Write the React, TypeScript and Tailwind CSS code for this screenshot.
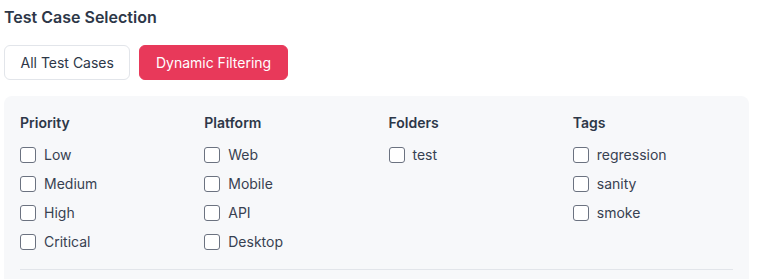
import { useState } from 'react'

const groups = [
  { title: 'Priority', items: ['Low', 'Medium', 'High', 'Critical'] },
  { title: 'Platform', items: ['Web', 'Mobile', 'API', 'Desktop'] },
  { title: 'Folders', items: ['test'] },
  { title: 'Tags', items: ['regression', 'sanity', 'smoke'] },
]

export default function App() {
  const [mode, setMode] = useState<'all' | 'dynamic'>('dynamic')
  const [checked, setChecked] = useState<Record<string, boolean>>({})

  function toggle(key: string) {
    setChecked(c => ({ ...c, [key]: !c[key] }))
  }

  return (
    <div className="bg-white w-[759px] h-[279px] overflow-hidden px-1 pt-[7px] font-['Inter','Liberation_Sans',sans-serif]">
      <h2 className="text-base leading-5 font-semibold text-[#2d3748]">Test Case Selection</h2>

      <div className="flex gap-[9px] mt-[18px]">
        <button
          onClick={() => setMode('all')}
          className={`h-[35px] px-[15.5px] rounded-md text-sm border ${mode === 'all' ? 'bg-[#e8395a] border-[#e8395a] text-white' : 'bg-white border-[#e2e5ea] text-[#2d3748]'}`}
        >
          All Test Cases
        </button>
        <button
          onClick={() => setMode('dynamic')}
          className={`h-[35px] px-[15.5px] rounded-md text-sm border ${mode === 'dynamic' ? 'bg-[#e8395a] border-[#e8395a] text-white' : 'bg-white border-[#e2e5ea] text-[#2d3748]'}`}
        >
          Dynamic Filtering
        </button>
      </div>

      {/* Filters panel */}
      <div className="mt-4 bg-[#f7f8fa] rounded-lg px-4 pt-[17px] w-[745px]">
        <div className="grid grid-cols-4 gap-6">
          {groups.map(g => (
            <div key={g.title}>
              <p className="text-sm font-semibold text-[#2d3748] leading-5">{g.title}</p>
              <div className="mt-[14px] flex flex-col gap-[13px]">
                {g.items.map(item => {
                  const key = g.title + ':' + item
                  return (
                    <label key={key} className="flex items-center gap-2 text-sm text-[#374151] leading-4 cursor-pointer">
                      <input
                        type="checkbox"
                        checked={!!checked[key]}
                        onChange={() => toggle(key)}
                        className="appearance-none w-4 h-4 rounded-[3px] border border-[#6b7280] bg-white checked:bg-[#e8395a] checked:border-[#e8395a] shrink-0"
                      />
                      {item}
                    </label>
                  )
                })}
              </div>
            </div>
          ))}
        </div>
        <div className="border-t border-[#e2e5ea] mt-[19px] h-10" />
      </div>
    </div>
  )
}
